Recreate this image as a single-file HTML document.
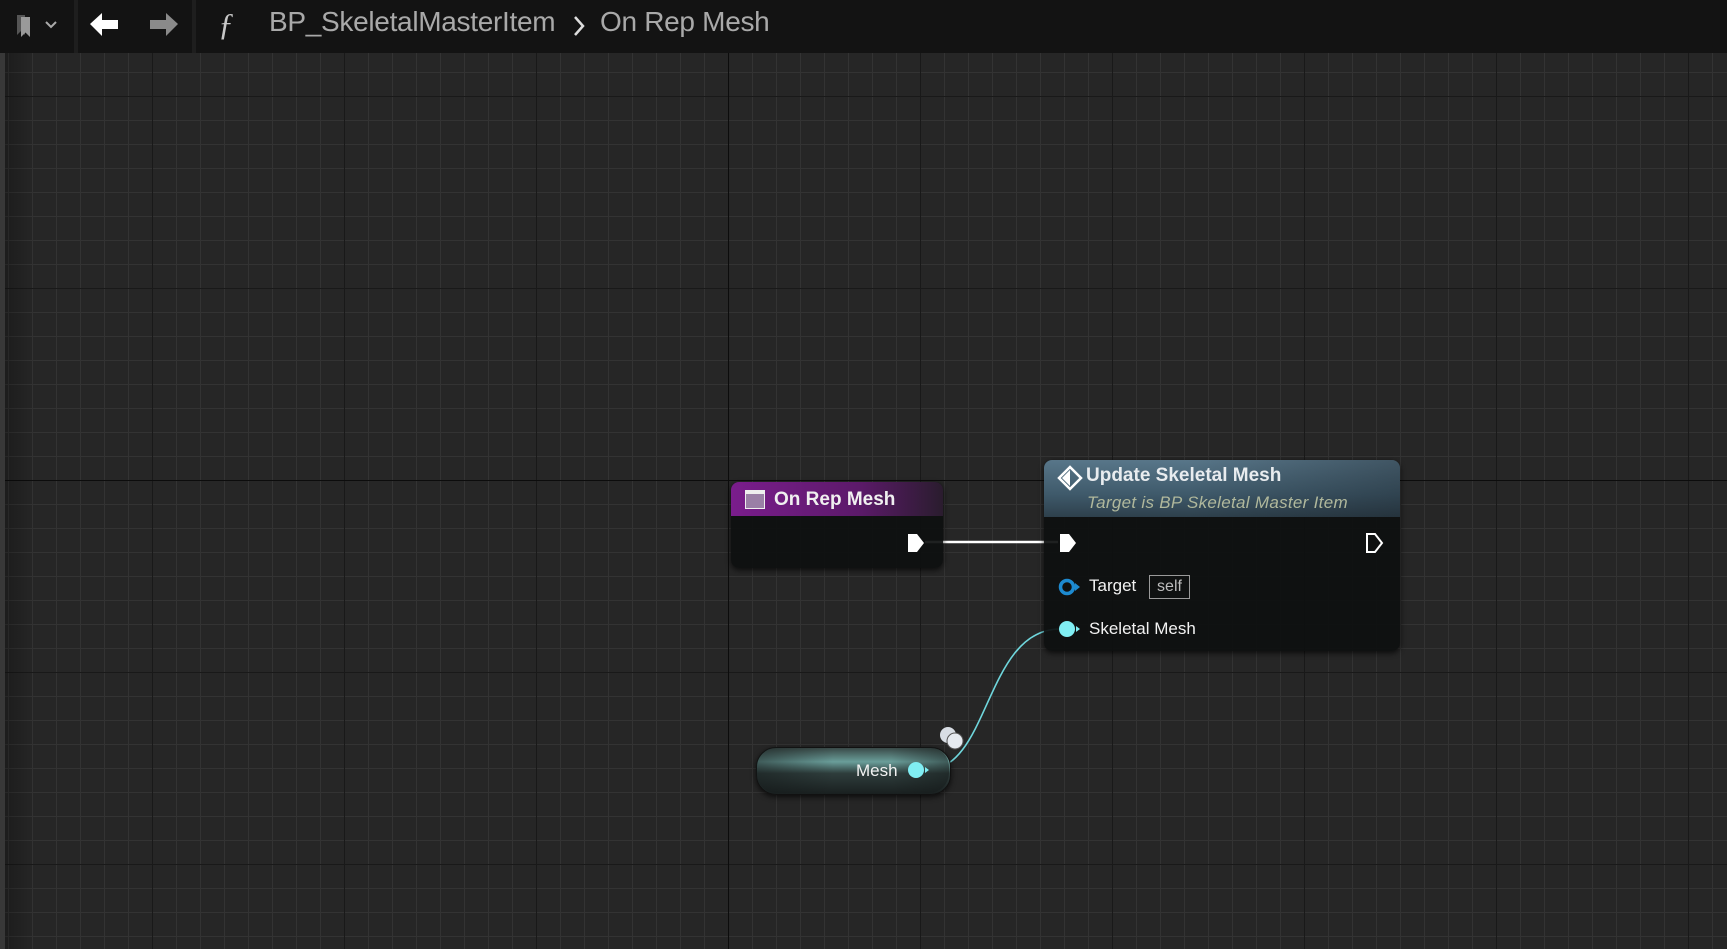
<!DOCTYPE html>
<html><head><meta charset="utf-8"><style>
html,body{margin:0;padding:0}
body{width:1727px;height:949px;overflow:hidden;position:relative;background:#262626;font-family:"Liberation Sans",sans-serif}
#grid{position:absolute;left:0;top:0;width:1727px;height:949px;
background-image:
linear-gradient(to right,#0c0c0c 0,#0c0c0c 1px,transparent 1px),
linear-gradient(to bottom,#0c0c0c 0,#0c0c0c 1px,transparent 1px),
linear-gradient(to right,#191919 0,#191919 1px,transparent 1px),
linear-gradient(to bottom,#191919 0,#191919 1px,transparent 1px),
linear-gradient(to right,#333 0,#333 1px,transparent 1px),
linear-gradient(to bottom,#333 0,#333 1px,transparent 1px);
background-size:1727px 949px,1727px 949px,192px 192px,192px 192px,24px 24px,24px 24px;
background-position:728px 0,0 480px,152px 0,0 96px,8px 0,0 0;
background-repeat:no-repeat,no-repeat,repeat,repeat,repeat,repeat}
#lstrip{position:absolute;left:0;top:0;width:5px;height:949px;background:#383838}
#lshade{position:absolute;left:5px;top:0;width:30px;height:949px;background:linear-gradient(to right,rgba(0,0,0,.25),transparent)}
#bar{position:absolute;left:0;top:0;width:1727px;height:53px;background:#131313}
.sep{position:absolute;top:0;width:4px;height:53px;background:#1e1e1e}
.crumb{position:absolute;top:6px;font-size:28px;color:#a9a9a9;white-space:nowrap;letter-spacing:-0.3px}
.node{position:absolute;border-radius:8px;background:rgba(14,16,16,.93);box-shadow:0 2px 6px rgba(0,0,0,.7);overflow:hidden}
.t{position:absolute;color:#fff;white-space:nowrap}
</style></head><body>
<div id="grid"></div><div id="lstrip"></div><div id="lshade"></div>
<div id="bar">
 <svg style="position:absolute;left:14px;top:12px" width="50" height="28" viewBox="0 0 50 28">
  <path d="M3 3h8v20l-4-4-4 4z" fill="#555"/><path d="M7 5h9v20l-4.5-4.5L7 25z" fill="#9a9a9a"/>
  <path d="M32 10l5 5 5-5" stroke="#aaa" stroke-width="2" fill="none"/>
 </svg>
 <div class="sep" style="left:74px"></div>
 <svg style="position:absolute;left:89px;top:12px" width="32" height="26" viewBox="0 0 32 26"><path d="M1 12L13 1v7h16v9H13v7z" fill="#fff"/></svg>
 <svg style="position:absolute;left:147px;top:12px" width="32" height="26" viewBox="0 0 32 26"><path d="M31 12L19 1v7H3v9h16v7z" fill="#8a8a8a"/></svg>
 <div class="sep" style="left:192px"></div>
 <div style="position:absolute;left:218px;top:6px;font-family:'Liberation Serif',serif;font-style:italic;font-size:32px;color:#c8c8c8">ƒ</div>
 <div class="crumb" style="left:269px">BP_SkeletalMasterItem</div>
 <svg style="position:absolute;left:572px;top:14px" width="14" height="24" viewBox="0 0 14 24"><path d="M3 3l8 9-8 9" stroke="#ddd" stroke-width="2.5" fill="none"/></svg>
 <div class="crumb" style="left:600px">On Rep Mesh</div>
</div>

<svg style="position:absolute;left:0;top:0" width="1727" height="949">
 <line x1="925" y1="542" x2="1058" y2="542" stroke="#fff" stroke-width="2.5"/>
 <path d="M927 770 C990 770 985 629 1060 629" stroke="#6fd6dc" stroke-width="1.6" fill="none"/>
</svg>

<!-- On Rep Mesh -->
<div class="node" style="left:731px;top:482px;width:212px;height:86px">
 <div style="position:absolute;left:0;top:0;width:212px;height:34px;background:linear-gradient(to right,#7a1d8c 0%,#5c1a6a 60%,#2a1c2e 100%)"></div>
 <div style="position:absolute;left:14px;top:8px;width:20px;height:19px;background:#9a7fa6;border:1.5px solid #eee;box-sizing:border-box;border-top-width:4px"></div>
 <div class="t" style="left:43px;top:7px;font-size:19px;font-weight:bold;color:#f0f0f0">On Rep Mesh</div>
 <svg style="position:absolute;left:175px;top:50px" width="20" height="22" viewBox="0 0 20 22"><path d="M2 2h9l7 9-7 9H2z" fill="#fff"/></svg>
</div>

<!-- Update Skeletal Mesh -->
<div class="node" style="left:1044px;top:460px;width:356px;height:191px">
 <div style="position:absolute;left:0;top:0;width:356px;height:57px;background:linear-gradient(to bottom,#587689 0%,#3f5a6b 60%,#2e404c 100%)"></div>
 <div style="position:absolute;left:0;top:0;width:356px;height:57px;background:linear-gradient(to right,transparent 40%,rgba(20,25,30,.35) 100%)"></div>
 <svg style="position:absolute;left:13px;top:5px" width="26" height="26" viewBox="0 0 26 26"><path d="M13 2l11 11-11 11L2 13z" fill="none" stroke="#fff" stroke-width="2.5"/><path d="M13 5v16L5 13z" fill="#fff"/></svg>
 <div class="t" style="left:42px;top:5px;font-size:19px;font-weight:bold;color:#e8ecef">Update Skeletal Mesh</div>
 <div class="t" style="left:43px;top:33px;font-size:17px;font-style:italic;color:#b0b89c;letter-spacing:0.3px">Target is BP Skeletal Master Item</div>
 <svg style="position:absolute;left:14px;top:72px" width="20" height="22" viewBox="0 0 20 22"><path d="M2 2h9l7 9-7 9H2z" fill="#fff"/></svg>
 <svg style="position:absolute;left:321px;top:72px" width="20" height="22" viewBox="0 0 20 22"><path d="M2 2h8l7 9-7 9H2z" fill="none" stroke="#fff" stroke-width="2"/></svg>
 <svg style="position:absolute;left:14px;top:117px" width="24" height="20" viewBox="0 0 24 20"><circle cx="9" cy="10" r="6.5" fill="none" stroke="#1d8ad0" stroke-width="3.5"/><path d="M17 6l5 4-5 4z" fill="#1d8ad0"/></svg>
 <div class="t" style="left:45px;top:116px;font-size:17px;color:#f2f2f2">Target</div>
 <div style="position:absolute;left:105px;top:115px;width:41px;height:24px;border:1.5px solid #9a9a9a;box-sizing:border-box;color:#bdbdbd;font-size:16px;text-align:center;line-height:21px">self</div>
 <svg style="position:absolute;left:14px;top:159px" width="24" height="20" viewBox="0 0 24 20"><circle cx="9" cy="10" r="8" fill="#80eef3"/><path d="M18 7l4 3-4 3z" fill="#80eef3"/></svg>
 <div class="t" style="left:45px;top:159px;font-size:17px;color:#f2f2f2">Skeletal Mesh</div>
</div>

<!-- Mesh getter -->
<div style="position:absolute;left:756px;top:747px;width:193px;height:46px;border-radius:20px;background:linear-gradient(to bottom,#3a4a48 0%,#6a9e9a 30%,#2e3d3c 55%,#1a2020 100%);box-shadow:0 2px 6px rgba(0,0,0,.7);border:1px solid #111"></div>
<div style="position:absolute;left:756px;top:747px;width:193px;height:46px;border-radius:20px;background:linear-gradient(to right,rgba(20,25,25,.5),transparent 40%,transparent 70%,rgba(20,25,25,.5))"></div>
<div class="t" style="left:856px;top:761px;font-size:17px;color:#f2f2f2">Mesh</div>
<svg style="position:absolute;left:907px;top:760px" width="24" height="20" viewBox="0 0 24 20"><circle cx="9" cy="10" r="8" fill="#80eef3"/><path d="M18 7l4 3-4 3z" fill="#80eef3"/></svg>
<svg style="position:absolute;left:936px;top:724px" width="34" height="30" viewBox="0 0 34 30">
 <circle cx="12" cy="11" r="8" fill="#d8dde4"/><circle cx="19" cy="17" r="8" fill="#e6eaf0" stroke="#555" stroke-width="1"/>
</svg>
</body></html>
